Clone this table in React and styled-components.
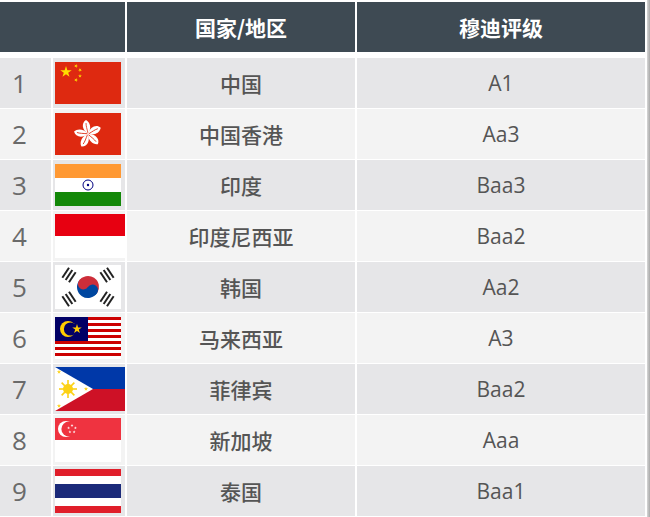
import React from 'react';
import styled, { createGlobalStyle } from 'styled-components';

const GlobalStyle = createGlobalStyle`
  body {
    margin: 0;
    background: #fff;
    font-family: "Open Sans", "Noto Sans CJK SC", sans-serif;
  }
`;

const Star = ({ cx, cy, r, fill, rot = 0 }) => {
  const pts = [];
  for (let i = 0; i < 10; i++) {
    const rr = i % 2 === 0 ? r : r * 0.382;
    const a = ((-90 + rot + i * 36) * Math.PI) / 180;
    pts.push(`${(cx + rr * Math.cos(a)).toFixed(2)},${(cy + rr * Math.sin(a)).toFixed(2)}`);
  }
  return <polygon points={pts.join(' ')} fill={fill} />;
};

const China = () => (
  <svg viewBox="0 0 66 42" width="66" height="42">
    <rect width="66" height="42" fill="#de2910" />
    <Star cx={11} cy={10} r={6} fill="#ffde00" />
    <Star cx={21} cy={4} r={2} fill="#ffde00" rot={20} />
    <Star cx={25} cy={8} r={2} fill="#ffde00" rot={40} />
    <Star cx={25} cy={14} r={2} fill="#ffde00" rot={0} />
    <Star cx={21} cy={18} r={2} fill="#ffde00" rot={20} />
  </svg>
);

const HongKong = () => (
  <svg viewBox="0 0 66 42" width="66" height="42">
    <rect width="66" height="42" fill="#de2910" />
    {[0, 72, 144, 216, 288].map((a) => (
      <g key={a} transform={`rotate(${a} 33 21)`}>
        <path d="M33 21 C27 17 26 10 31 7 C35 9 37 15 33 21 Z" fill="#fff" />
        <path d="M33 20 C32 16 31 13 31 10" stroke="#de2910" strokeWidth="0.8" fill="none" />
      </g>
    ))}
  </svg>
);

const India = () => (
  <svg viewBox="0 0 66 42" width="66" height="42">
    <rect width="66" height="14" fill="#ff9933" />
    <rect y="14" width="66" height="14" fill="#fff" />
    <rect y="28" width="66" height="14" fill="#138808" />
    <circle cx="33" cy="21" r="5" fill="none" stroke="#000080" strokeWidth="1" />
    <circle cx="33" cy="21" r="1.2" fill="#000080" />
  </svg>
);

const Indonesia = () => (
  <svg viewBox="0 0 70 44" width="70" height="44">
    <rect width="70" height="22" fill="#e70011" />
    <rect y="22" width="70" height="22" fill="#fff" />
  </svg>
);

const Korea = () => (
  <svg viewBox="0 0 66 44" width="66" height="44">
    <rect width="66" height="44" fill="#fff" />
    <g transform="rotate(33.7 33 22)">
      <path d="M22 22 A11 11 0 0 1 44 22 Z" fill="#cd2e3a" />
      <path d="M22 22 A11 11 0 0 0 44 22 Z" fill="#0047a0" />
      <circle cx="27.5" cy="22" r="5.5" fill="#cd2e3a" />
      <circle cx="38.5" cy="22" r="5.5" fill="#0047a0" />
    </g>
    {[
      [-56.3, 14, 10],
      [56.3, 52, 10],
      [56.3, 14, 34],
      [-56.3, 52, 34],
    ].map(([r, x, y], i) => (
      <g key={i} transform={`translate(${x} ${y}) rotate(${r})`}>
        <rect x="-6" y="-5" width="12" height="2" fill="#222" />
        <rect x="-6" y="-1" width="12" height="2" fill="#222" />
        <rect x="-6" y="3" width="12" height="2" fill="#222" />
      </g>
    ))}
  </svg>
);

const Malaysia = () => (
  <svg viewBox="0 0 66 42" width="66" height="42">
    {Array.from({ length: 14 }).map((_, i) => (
      <rect key={i} y={i * 3} width="66" height="3" fill={i % 2 === 0 ? '#cc0001' : '#fff'} />
    ))}
    <rect width="33" height="24" fill="#010066" />
    <circle cx="13" cy="12" r="8" fill="#fc0" />
    <circle cx="15.5" cy="12" r="6.6" fill="#010066" />
    <Star cx={22} cy={12} r={5} fill="#fc0" />
  </svg>
);

const Philippines = () => (
  <svg viewBox="0 0 70 44" width="70" height="44">
    <rect width="70" height="22" fill="#0038a8" />
    <rect y="22" width="70" height="22" fill="#ce1126" />
    <polygon points="0,0 38,22 0,44" fill="#fff" />
    <circle cx="13" cy="22" r="5" fill="#fcd116" />
    {[0, 45, 90, 135].map((a) => (
      <rect key={a} x="4" y="21.2" width="18" height="1.6" fill="#fcd116" transform={`rotate(${a} 13 22)`} />
    ))}
    <Star cx={4} cy={5} r={2.2} fill="#fcd116" />
    <Star cx={4} cy={39} r={2.2} fill="#fcd116" />
    <Star cx={31} cy={22} r={2.2} fill="#fcd116" />
  </svg>
);

const Singapore = () => (
  <svg viewBox="0 0 66 44" width="66" height="44">
    <rect width="66" height="22" fill="#ef3340" />
    <rect y="22" width="66" height="22" fill="#fff" />
    <circle cx="11" cy="11" r="8" fill="#fff" />
    <circle cx="14" cy="11" r="7.6" fill="#ef3340" />
    {[0, 72, 144, 216, 288].map((a) => {
      const rad = ((a - 90) * Math.PI) / 180;
      return <Star key={a} cx={17 + 3.6 * Math.cos(rad)} cy={11 + 3.6 * Math.sin(rad)} r={1.6} fill="#fff" />;
    })}
  </svg>
);

const Thailand = () => (
  <svg viewBox="0 0 66 44" width="66" height="44">
    <rect width="66" height="44" fill="#fff" />
    <rect width="66" height="7" fill="#e01e2a" />
    <rect y="15" width="66" height="14" fill="#1b2a7a" />
    <rect y="37" width="66" height="7" fill="#e01e2a" />
  </svg>
);

const rows = [
  { flag: China, name: '中国', rating: 'A1' },
  { flag: HongKong, name: '中国香港', rating: 'Aa3' },
  { flag: India, name: '印度', rating: 'Baa3' },
  { flag: Indonesia, name: '印度尼西亚', rating: 'Baa2' },
  { flag: Korea, name: '韩国', rating: 'Aa2' },
  { flag: Malaysia, name: '马来西亚', rating: 'A3' },
  { flag: Philippines, name: '菲律宾', rating: 'Baa2' },
  { flag: Singapore, name: '新加坡', rating: 'Aaa' },
  { flag: Thailand, name: '泰国', rating: 'Baa1' },
];

const Page = styled.div`
  display: flex;
  width: 650px;
  height: 517px;
  overflow: hidden;
  background: #fff;
`;

const Table = styled.div`
  width: 645px;
  padding-top: 2px;
  display: grid;
  grid-template-columns: 51px 72px 228px 1fr;
  grid-template-rows: 55px repeat(9, 50px);
  column-gap: 2px;
  row-gap: 1px;
  background: #fff;
`;

const Edge = styled.div`
  width: 3px;
  margin-left: 2px;
  background: linear-gradient(to right, #d6d6d6, #a9a9a9);
`;

const Head = styled.div`
  grid-column: ${(p) => p.$span || 'auto'};
  background: #3e4a53;
  color: #fff;
  font-family: "Noto Sans CJK SC", sans-serif;
  font-weight: 700;
  font-size: 21px;
  display: flex;
  align-items: center;
  justify-content: center;
  margin-bottom: 5px;
`;

const Cell = styled.div`
  background: ${(p) => (p.$odd ? '#e6e6e8' : '#f3f3f3')};
  display: flex;
  align-items: center;
  justify-content: center;
  color: #555;
`;

const Num = styled(Cell)`
  font-family: "Open Sans", sans-serif;
  font-size: 26px;
  color: #6a6a6a;
  justify-content: flex-start;
  padding-left: 12px;
`;

const FlagCell = styled(Cell)`
  justify-content: flex-start;
  padding-left: 2px;
  svg { display: block; }
`;

const Name = styled(Cell)`
  font-family: "Noto Sans CJK SC", sans-serif;
  font-size: 21px;
  font-weight: 500;
`;

const Rating = styled(Cell)`
  font-family: "Open Sans", sans-serif;
  font-size: 21px;
`;

export default function App() {
  return (
    <Page>
      <GlobalStyle />
      <Table>
        <Head $span="1 / 3" />
        <Head>国家/地区</Head>
        <Head>穆迪评级</Head>
        {rows.map((r, i) => {
          const Flag = r.flag;
          const odd = i % 2 === 0;
          return (
            <React.Fragment key={i}>
              <Num $odd={odd}>{i + 1}</Num>
              <FlagCell $odd={odd}>
                <Flag />
              </FlagCell>
              <Name $odd={odd}>{r.name}</Name>
              <Rating $odd={odd}>{r.rating}</Rating>
            </React.Fragment>
          );
        })}
      </Table>
      <Edge />
    </Page>
  );
}
